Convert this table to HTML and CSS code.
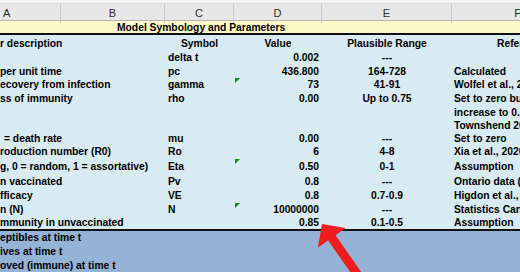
FILE: index.html
```html
<!DOCTYPE html>
<html lang="en">
<head>
    <meta charset="UTF-8">
    <title>Model Symbology and Parameters</title>
    <link rel="stylesheet" href="styles.css">
</head>
<body>
    <div class="sheet">
        <div class="topstrip"></div>

        <!-- column letters -->
        <div class="colheads">
            <div class="ch ch-a">A</div>
            <div class="ch">B</div>
            <div class="ch">C</div>
            <div class="ch">D</div>
            <div class="ch">E</div>
            <div class="ch">F</div>
        </div>

        <div class="title">Model Symbology and Parameters</div>

        <div class="params">
            <div class="row">
                <div class="a">r description</div><div></div>
                <div class="c head">Symbol</div><div class="d head">Value</div>
                <div class="e">Plausible Range</div><div class="f head-ref">References</div>
            </div>
            <div class="row">
                <div class="a"></div><div></div>
                <div class="c">delta t</div><div class="d">0.002</div>
                <div class="e">---</div><div class="f"></div>
            </div>
            <div class="row">
                <div class="a">per unit time</div><div></div>
                <div class="c">pc</div><div class="d">436.800</div>
                <div class="e">164-728</div><div class="f">Calculated</div>
            </div>
            <div class="row">
                <div class="a">ecovery from infection</div><div></div>
                <div class="c">gamma</div><div class="d flag">73</div>
                <div class="e">41-91</div><div class="f">Wolfel et al., 2020</div>
            </div>
            <div class="row">
                <div class="a">ss of immunity</div><div></div>
                <div class="c">rho</div><div class="d">0.00</div>
                <div class="e">Up to 0.75</div><div class="f">Set to zero but</div>
            </div>
            <div class="row">
                <div class="a"></div><div></div>
                <div class="c"></div><div class="d"></div>
                <div class="e"></div><div class="f">increase to 0.75</div>
            </div>
            <div class="row">
                <div class="a"></div><div></div>
                <div class="c"></div><div class="d"></div>
                <div class="e"></div><div class="f">Townshend 2020</div>
            </div>
            <div class="row">
                <div class="a indent">= death rate</div><div></div>
                <div class="c">mu</div><div class="d">0.00</div>
                <div class="e">---</div><div class="f">Set to zero</div>
            </div>
            <div class="row">
                <div class="a">roduction number (R0)</div><div></div>
                <div class="c">Ro</div><div class="d">6</div>
                <div class="e">4-8</div><div class="f">Xia et al., 2020</div>
            </div>
            <div class="row">
                <div class="a">g, 0 = random, 1 = assortative)</div><div></div>
                <div class="c">Eta</div><div class="d flag">0.50</div>
                <div class="e">0-1</div><div class="f">Assumption</div>
            </div>
            <div class="row">
                <div class="a">n vaccinated</div><div></div>
                <div class="c">Pv</div><div class="d">0.8</div>
                <div class="e">---</div><div class="f">Ontario data (2021)</div>
            </div>
            <div class="row">
                <div class="a">fficacy</div><div></div>
                <div class="c">VE</div><div class="d">0.8</div>
                <div class="e">0.7-0.9</div><div class="f">Higdon et al., 2021</div>
            </div>
            <div class="row">
                <div class="a">n (N)</div><div></div>
                <div class="c">N</div><div class="d flag">10000000</div>
                <div class="e">---</div><div class="f">Statistics Canada</div>
            </div>
            <div class="row">
                <div class="a">mmunity in unvaccinated</div><div></div>
                <div class="c"></div><div class="d">0.85</div>
                <div class="e">0.1-0.5</div><div class="f">Assumption</div>
            </div>
        </div>

        <div class="vars">
            <div class="row"><div class="a">eptibles at time t</div></div>
            <div class="row"><div class="a">ives at time t</div></div>
            <div class="row"><div class="a">oved (immune) at time t</div></div>
        </div>

        <!-- red callout arrow -->
        <svg class="arrow" width="520" height="272" viewBox="0 0 520 272">
            <polygon points="322,224 345.6,228.1 335.5,235.3 367.1,280.3 359.7,285.5 328.1,240.5 317.9,247.6" fill="#ee1c1c"/>
        </svg>
    </div>
</body>
</html>
```

FILE: styles.css
```css
body {
    margin: 0;
    width: 520px;
    height: 272px;
    overflow: hidden;
    background: #fff;
    font-family: "Liberation Sans", Arial, sans-serif;
}
.sheet {
    position: relative;
    width: 520px;
    height: 272px;
    overflow: hidden;
    --cols: 61px 104px 69px 88px 130px 132px;
}
.topstrip {
    height: 3px;
    background: #f3f3f3;
    border-bottom: 1px solid #dcdcdc;
}
.colheads {
    display: grid;
    grid-template-columns: var(--cols);
    height: 16px;
    background: #e7e7e7;
    border-bottom: 1px solid #b4b4b4;
}
.ch {
    text-align: center;
    font-size: 11px;
    line-height: 19px;
    color: #2a2a2a;
    border-right: 1px solid #c9c9c9;
}
.ch-a {
    text-align: left;
    padding-left: 3px;
}
.title {
    height: 12px;
    background: #fefac6;
    border-bottom: 2px solid #111;
    padding-left: 117px;
    font-size: 10.3px;
    font-weight: bold;
    line-height: 13px;
    white-space: nowrap;
}
.params {
    display: grid;
    grid-template-rows: 16px 14px 13px 14px 14px 13px 13px 13px 14px 15px 15px 14px 13px 13px;
    background: #d8ebf2;
    border-bottom: 2px solid #111;
}
.vars {
    display: grid;
    grid-template-rows: 14px 14px 13px;
    background: #95b3d7;
    border-bottom: 2px solid #111;
}
.row {
    display: grid;
    grid-template-columns: var(--cols);
    align-items: center;
    font-size: 10.3px;
    font-weight: bold;
    color: #000;
    white-space: nowrap;
}
.row > div {
    line-height: 12px;
}
.params .row:first-child {
    padding-top: 2px;
}
.a {
    overflow: visible;
}
.indent {
    padding-left: 4px;
}
.c {
    padding-left: 3px;
}
.c.head {
    padding-left: 0;
    text-align: center;
}
.d {
    position: relative;
    text-align: right;
    padding-right: 3px;
    align-self: stretch;
    display: flex;
    align-items: center;
    justify-content: flex-end;
}
.d.head {
    justify-content: center;
    padding-right: 0;
}
.e {
    text-align: center;
}
.f {
    padding-left: 2px;
}
.head-ref {
    padding-left: 45px;
}
/* green error indicator in the cell corner */
.flag::before {
    content: "";
    position: absolute;
    top: 0;
    left: 1px;
    border-top: 5px solid #17881a;
    border-right: 5px solid transparent;
}
.arrow {
    position: absolute;
    left: 0;
    top: 0;
    pointer-events: none;
}
```
